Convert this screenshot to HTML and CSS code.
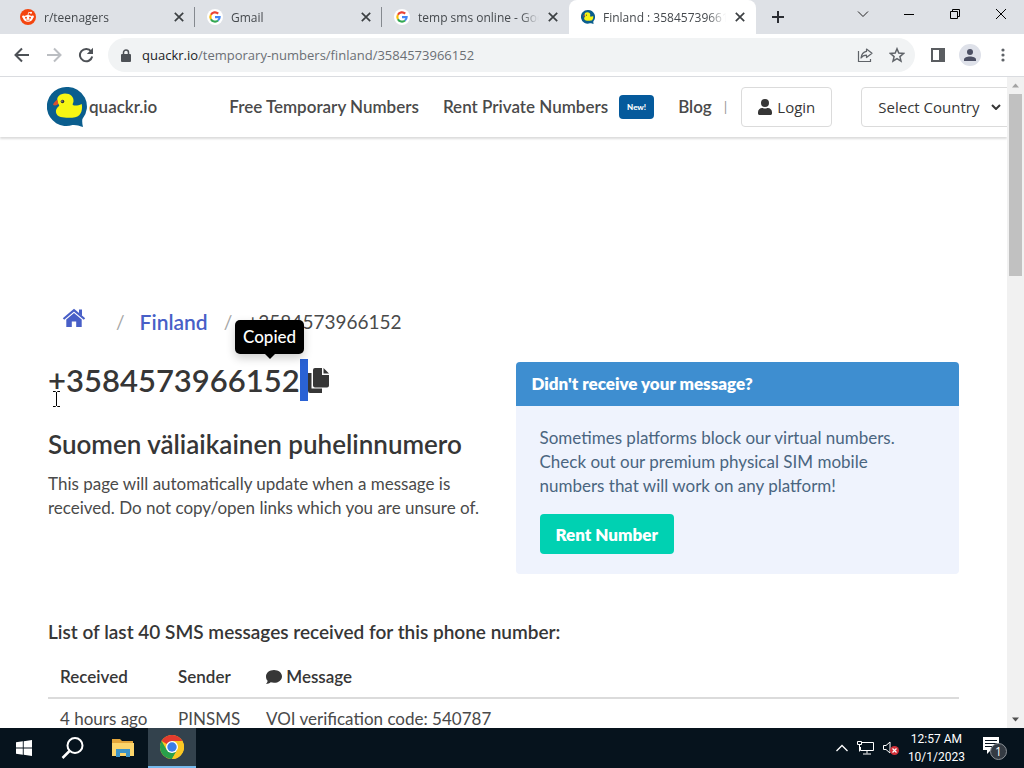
FILE: index.html
```html
<!DOCTYPE html>
<html lang="en">
<head>
<meta charset="UTF-8">
<meta name="viewport" content="width=device-width, initial-scale=1.0">
<title>Finland : 3584573966152</title>
<link rel="stylesheet" href="styles.css">
</head>
<body>

<!-- shared icons -->
<svg class="symbols" aria-hidden="true">
    <symbol id="google" viewBox="0 0 18 18">
        <circle cx="9" cy="9" r="9" fill="#fff"/>
        <g fill="none" stroke-width="2.4">
            <path d="M12.6 5.2A5.2 5.2 0 0 0 4.4 6.5" stroke="#ea4335"/>
            <path d="M4.4 6.5A5.2 5.2 0 0 0 4.4 11.5" stroke="#fbbc05"/>
            <path d="M4.4 11.5A5.2 5.2 0 0 0 12.4 12.9" stroke="#34a853"/>
            <path d="M12.4 12.9A5.2 5.2 0 0 0 14.2 9.2H9" stroke="#4285f4"/>
        </g>
    </symbol>
    <symbol id="close" viewBox="0 0 10 10">
        <path d="M1.5 1.5l7 7M8.5 1.5l-7 7" stroke="#3c4043" stroke-width="1.4"/>
    </symbol>
    <symbol id="duck" viewBox="0 0 40 40">
        <path d="M19.500 0a19.500 19.500 0 1 0 6 38c4-.3 6 .6 10.500 2-.8-3-1-6-.6-8A19.500 19.500 0 0 0 19.500 0z" fill="#0b5e8e"/>
        <path d="M10.500 15C9 10 13 6.500 18 6.500c5.500 0 9 3.500 8.500 8-.2 1.500-1 2.300-.8 3.200 1.500 1.500 5.500 1 9-.8 1 4 .3 12-6.500 13.300-4 .8-11 .7-14.500-.3-5.500-1.500-6.500-7.500-1.700-11 1-.8-1-1.700-1.500-3.900z" fill="#f7f614"/>
        <path d="M10.300 12.500C8.500 14 6.500 15.500 6 18c2 1 4.300.3 5.300-1.200z" fill="#d9502e"/>
        <circle cx="15.500" cy="14.500" r="1.800" fill="#333"/>
        <circle cx="15" cy="14" r=".6" fill="#fff"/>
    </symbol>
</svg>

<header class="tabstrip">
    <div class="tab">
        <svg class="favicon" viewBox="0 0 16 16">
            <circle cx="8" cy="8" r="8" fill="#f4450f"/>
            <ellipse cx="8" cy="9.300" rx="4.800" ry="3.400" fill="#fff"/>
            <circle cx="3.400" cy="7.700" r="1.300" fill="#fff"/>
            <circle cx="12.600" cy="7.700" r="1.300" fill="#fff"/>
            <circle cx="11" cy="3.700" r="1" fill="#fff"/>
            <path d="M8 6l.7-2.700 2 .5" fill="none" stroke="#fff" stroke-width=".8"/>
            <circle cx="6" cy="8.700" r="1" fill="#f4450f"/>
            <circle cx="10" cy="8.700" r="1" fill="#f4450f"/>
            <path d="M6 10.800q2 1.200 4 0" fill="none" stroke="#f4450f" stroke-width=".7"/>
        </svg>
        <span class="tab-title">r/teenagers</span>
        <button class="tab-close" aria-label="Close tab"><svg><use href="#close"/></svg></button>
    </div>
    <div class="tab">
        <svg class="favicon"><use href="#google"/></svg>
        <span class="tab-title">Gmail</span>
        <button class="tab-close" aria-label="Close tab"><svg><use href="#close"/></svg></button>
    </div>
    <div class="tab last">
        <svg class="favicon"><use href="#google"/></svg>
        <span class="tab-title">temp sms online - Google Search</span>
        <button class="tab-close" aria-label="Close tab"><svg><use href="#close"/></svg></button>
    </div>
    <div class="tab active">
        <svg class="favicon duck-small"><use href="#duck"/></svg>
        <span class="tab-title">Finland : 3584573966152</span>
        <button class="tab-close" aria-label="Close tab"><svg><use href="#close"/></svg></button>
    </div>
    <button class="new-tab" aria-label="New tab">
        <svg width="12" height="12" viewBox="0 0 12 12"><path d="M6 0v12M0 6h12" stroke="#2b2d33" stroke-width="2"/></svg>
    </button>
    <div class="window-buttons">
        <button aria-label="Search tabs"><svg width="12" height="12" viewBox="0 0 12 12"><path d="M1 3.500l5 5 5-5" fill="none" stroke="#222"/></svg></button>
        <button aria-label="Minimize"><svg width="12" height="12" viewBox="0 0 12 12"><path d="M1 6.500h10" stroke="#000"/></svg></button>
        <button aria-label="Restore"><svg width="12" height="12" viewBox="0 0 12 12"><path d="M1.500 3.500h7v7h-7zM3.500 3.500v-2h7v7h-2" fill="none" stroke="#000"/></svg></button>
        <button aria-label="Close"><svg width="12" height="12" viewBox="0 0 12 12"><path d="M1 1l10 10M11 1L1 11" stroke="#000"/></svg></button>
    </div>
</header>

<div class="toolbar">
    <button aria-label="Back"><svg width="16" height="16" viewBox="0 0 16 16"><path d="M15 8H2M8 1.500L1.500 8 8 14.500" fill="none" stroke="#4d5156" stroke-width="2"/></svg></button>
    <button aria-label="Forward"><svg width="16" height="16" viewBox="0 0 16 16"><path d="M1 8h13M8 1.500L14.500 8 8 14.500" fill="none" stroke="#bbbec2" stroke-width="2"/></svg></button>
    <button aria-label="Reload"><svg width="16" height="16" viewBox="0 0 16 16"><path d="M13.200 4.500A6.200 6.200 0 1 0 14.200 9.500" fill="none" stroke="#4d5156" stroke-width="2"/><path d="M15 .8V7H8.800z" fill="#4d5156"/></svg></button>
    <div class="omnibox">
        <svg class="lock" width="10" height="13" viewBox="0 0 10 13"><path d="M2.500 5.500V3.500a2.500 2.500 0 0 1 5 0v2" fill="none" stroke="#4d5156" stroke-width="1.500"/><rect x="0" y="5" width="10" height="8" rx="1" fill="#4d5156"/></svg>
        <a class="url" href="#">quackr.io<span>/temporary-numbers/finland/3584573966152</span></a>
        <button aria-label="Share"><svg width="16" height="16" viewBox="0 0 16 16"><path d="M1.500 4v10.500h12V12" fill="none" stroke="#5f6368" stroke-width="1.200"/><path d="M9.500 2l5.500 4.300-5.500 4.200V8.200C7 8.200 5.300 9 4 11c.4-3.500 2.500-6 5.500-6.600z" fill="none" stroke="#5f6368" stroke-width="1.200" stroke-linejoin="round"/></svg></button>
        <button aria-label="Bookmark"><svg width="16" height="16" viewBox="0 0 16 16"><path d="M8 1.800l1.800 4.300 4.700.4-3.600 3.100 1.100 4.600L8 11.700l-4 2.500 1.100-4.600L1.500 6.500l4.700-.4z" fill="none" stroke="#5f6368" stroke-width="1.500"/></svg></button>
    </div>
    <button aria-label="Side panel"><svg width="14" height="14" viewBox="0 0 14 14"><path d="M0 0h14v14H0zM2 2v10h6V2z" fill="#5a5d61" fill-rule="evenodd"/></svg></button>
    <button class="profile" aria-label="Profile"><svg width="22" height="22" viewBox="0 0 22 22"><circle cx="11" cy="11" r="11" fill="#dee1e9"/><circle cx="11" cy="8" r="3" fill="#4b4f63"/><path d="M5 17v-1.500c0-4 12-4 12 0V17z" fill="#4b4f63"/></svg></button>
    <button aria-label="Menu"><svg width="4" height="14" viewBox="0 0 4 14"><g fill="#5f6368"><circle cx="2" cy="2" r="1.600"/><circle cx="2" cy="7" r="1.600"/><circle cx="2" cy="12" r="1.600"/></g></svg></button>
</div>

<div class="window">
    <div class="page">
        <nav class="navbar">
            <a class="brand" href="#"><svg width="40" height="40"><use href="#duck"/></svg>quackr.io</a>
            <a class="nav-link" href="#">Free Temporary Numbers</a>
            <a class="nav-link" href="#">Rent Private Numbers <span class="badge">New!</span></a>
            <a class="nav-link" href="#">Blog</a>
            <span class="divider">|</span>
            <button class="login"><svg width="14" height="16" viewBox="0 0 448 512"><path fill="#363636" d="M224 256a128 128 0 1 0 0-256 128 128 0 0 0 0 256zm90 32h-17a174 174 0 0 1-146 0h-17C60 288 0 348 0 422v42c0 27 21 48 48 48h352c27 0 48-21 48-48v-42c0-74-60-134-134-134z"/></svg>Login</button>
            <div class="country">
                <select aria-label="Select Country"><option>Select Country</option></select>
                <svg width="10" height="6" viewBox="0 0 10 6"><path d="M1 1l4 4 4-4" fill="none" stroke="#363636" stroke-width="2"/></svg>
            </div>
        </nav>

        <main class="container">
            <div class="breadcrumb">
                <a class="home" href="#" aria-label="Home"><svg width="24" height="20" viewBox="0 0 24 20"><path d="M1.500 11L12 2.200 22.500 11" fill="none" stroke="#485fc7" stroke-width="2.200"/><path d="M17 1.500h3V8l-3-2.500z" fill="#485fc7"/><path d="M4.300 11.500L12 5l7.700 6.500V19h-5.500v-5.500H9.800V19H4.300z" fill="#485fc7"/></svg></a>
                <span class="slash">/</span>
                <a class="place" href="#">Finland</a>
                <span class="slash">/</span>
                <span>+3584573966152</span>
            </div>

            <div class="columns">
                <div class="number-info">
                    <h1>+3584573966152<span class="selected">&nbsp;</span><button class="copy" aria-label="Copy"><svg width="21" height="25" viewBox="0 0 21 25"><path d="M0 5h3.500v15.500H14V25H2a2 2 0 0 1-2-2z" fill="#363636"/><path d="M7 0h7v7h7v10.500a2 2 0 0 1-2 2H7a2 2 0 0 1-2-2V2a2 2 0 0 1 2-2z" fill="#363636"/><path d="M15.500 0L21 5.500h-5.500z" fill="#363636"/></svg></button><span class="tooltip">Copied</span></h1>
                    <h2>Suomen väliaikainen puhelinnumero</h2>
                    <p>This page will automatically update when a message is received. Do not copy/open links which you are unsure of.</p>
                    <svg class="cursor" width="7" height="16" viewBox="0 0 7 16"><path d="M0 .5h2.500l1 1 1-1H7M0 15.500h2.500l1-1 1 1H7M3.500 1v14" fill="none" stroke="#000"/></svg>
                </div>
                <article class="message">
                    <h3>Didn't receive your message?</h3>
                    <div class="message-body">
                        <p>Sometimes platforms block our virtual numbers. Check out our premium physical SIM mobile numbers that will work on any platform!</p>
                        <button class="rent">Rent Number</button>
                    </div>
                </article>
            </div>

            <h4>List of last 40 SMS messages received for this phone number:</h4>
            <table>
                <thead>
                    <tr>
                        <th class="received">Received</th>
                        <th class="sender">Sender</th>
                        <th><svg width="16" height="14" viewBox="0 0 16 14"><path d="M8 0c4.500 0 8 2.800 8 6.400s-3.500 6.400-8 6.400c-1.200 0-2.300-.2-3.300-.5C3.500 13.200 1.800 14 0 14c.8-.9 1.500-2 1.600-3.200C.6 9.600 0 8.100 0 6.400 0 2.800 3.500 0 8 0z" fill="#363636"/></svg> Message</th>
                    </tr>
                </thead>
                <tbody>
                    <tr>
                        <td>4 hours ago</td>
                        <td>PINSMS</td>
                        <td>VOI verification code: 540787</td>
                    </tr>
                </tbody>
            </table>
        </main>
    </div>
    <div class="scrollbar">
        <svg width="17" height="17" viewBox="0 0 17 17"><path d="M5 10.500l3.500-4 3.500 4z" fill="#a3a3a3"/></svg>
        <div class="thumb"></div>
        <svg class="down" width="17" height="17" viewBox="0 0 17 17"><path d="M5 6.500l3.500 4 3.500-4z" fill="#505050"/></svg>
    </div>
</div>

<footer class="taskbar">
    <button aria-label="Start"><svg width="16" height="16" viewBox="0 0 16 16"><path d="M0 2.300L6.800 1.300v6.200H0zM7.700 1.200L16 0v7.500H7.700zM0 8.400h6.800v6.300L0 13.700zM7.700 8.400H16V16l-8.300-1.200z" fill="#fff"/></svg></button>
    <button aria-label="Search"><svg width="24" height="24" viewBox="0 0 24 24"><circle cx="14" cy="9.500" r="7.500" fill="none" stroke="#fff" stroke-width="2"/><path d="M8.500 15l-7 7" stroke="#fff" stroke-width="2.500"/></svg></button>
    <button aria-label="File Explorer"><svg width="22" height="18" viewBox="0 0 22 18"><path d="M0 0h8l2 2h11v5H0z" fill="#e3a63b"/><path d="M0 4h22v13H0z" fill="#fcd56b"/><path d="M4 10h14v8h-4v-4H8v4H4z" fill="#3c93c8"/></svg></button>
    <button class="running" aria-label="Google Chrome"><svg width="24" height="24" viewBox="0 0 24 24"><circle cx="12" cy="12" r="12" fill="#fbc723"/><path d="M12 12L1.600 6A12 12 0 0 1 22.400 6H12z" fill="#e33b2e"/><path d="M1.600 6L6.800 15 12 18l-.8 6A12 12 0 0 1 1.600 6z" fill="#29a04b"/><path d="M6.800 15h10.400L12 24h-1z" fill="#29a04b"/><path d="M17.200 15L12 24A12 12 0 0 0 22.400 6H12z" fill="#fbc723"/><circle cx="12" cy="12" r="6" fill="#fff"/><circle cx="12" cy="12" r="4.700" fill="#3b7de8"/></svg></button>
    <div class="tray">
        <svg width="12" height="8" viewBox="0 0 12 8"><path d="M.5 7L6 1.500 11.500 7" fill="none" stroke="#fff" stroke-width="1.300"/></svg>
        <svg width="17" height="14" viewBox="0 0 17 14"><path d="M5 1.500h11.500v8H3.500V6M10 9.500v3M6 13h8M.5.500h4v3h-4zM2.500 4v6.500" fill="none" stroke="#fff"/></svg>
        <svg width="16" height="14" viewBox="0 0 16 14"><path d="M.5 4.500H3l4-3.500v11L3 8.500H.500z" fill="none" stroke="#fff"/><circle cx="11.500" cy="9.500" r="4.500" fill="#d22f38"/><path d="M9.500 7.500l4 4M13.500 7.500l-4 4" stroke="#fff" stroke-width="1.200"/></svg>
        <div class="clock">12:57 AM<br>10/1/2023</div>
        <svg class="action" width="26" height="26" viewBox="0 0 26 26"><path d="M1 2h16v13H9l-4 4v-4H1z" fill="#fff"/><path d="M3 5.500h12M3 8.500h12M3 11.500h7" stroke="#08141f"/><circle cx="16.500" cy="16.500" r="8" fill="#343b43" stroke="#8a9096"/><text x="16.500" y="21" text-anchor="middle">1</text></svg>
    </div>
</footer>

</body>
</html>
```
FILE: styles.css
```css
* {
    box-sizing: border-box;
}
body {
    margin: 0;
    height: 100vh;
    display: flex;
    flex-direction: column;
    overflow: hidden;
    font-family: "Open Sans", "Noto Sans", sans-serif;
    background-color: #fff;
}
button {
    border: none;
    background: none;
    padding: 0;
    font-family: inherit;
    display: flex;
    align-items: center;
    justify-content: center;
}
a {
    text-decoration: none;
}
h1, h2, h3, h4, p {
    margin: 0;
}
svg {
    flex: none;
}
.symbols {
    display: none;
}

/* tab strip */
.tabstrip {
    display: flex;
    height: 34px;
    flex: none;
    padding-left: 8px;
    background-color: #dee1e6;
    font-size: 12px;
    color: #45494d;
}
.tab {
    width: 187px;
    display: flex;
    align-items: center;
    padding: 0 10px 0 12px;
    background: linear-gradient(#85898f, #85898f) right center / 1px 20px no-repeat;
}
.tab.last {
    background: none;
}
.tab.active {
    background: #fff;
    border-radius: 8px 8px 0 0;
}
.favicon {
    width: 16px;
    height: 16px;
    margin-right: 8px;
}
.favicon.duck-small {
    width: 14px;
    margin-right: 8px;
}
.tab-title {
    flex: 1;
    overflow: hidden;
    white-space: nowrap;
    margin-right: 8px;
    -webkit-mask-image: linear-gradient(to right, #000 85%, transparent);
    mask-image: linear-gradient(to right, #000 85%, transparent);
}
.tab-close svg {
    width: 12px;
    height: 12px;
}
.new-tab {
    width: 44px;
}
.window-buttons {
    display: flex;
    margin-left: auto;
    height: 28px;
}
.window-buttons button {
    width: 46px;
}

/* toolbar */
.toolbar {
    display: flex;
    align-items: center;
    height: 43px;
    flex: none;
    padding: 0 12px 0 6px;
    border-bottom: 1px solid #dadce0;
}
.toolbar > button {
    width: 32px;
}
.omnibox {
    flex: 1;
    display: flex;
    align-items: center;
    height: 34px;
    margin: 0 7px 0 6px;
    padding: 0 2px 0 13px;
    border-radius: 17px;
    background-color: #f1f3f4;
}
.omnibox button {
    width: 32px;
}
.url {
    flex: 1;
    margin-left: 11px;
    font-size: 13px;
    color: #202124;
}
.url span {
    color: #6b6f74;
}
.toolbar > button:last-child {
    width: 34px;
    margin-right: -8px;
}

/* browser content */
.window {
    flex: 1;
    min-height: 0;
    display: flex;
}
.page {
    flex: 1;
    min-width: 0;
    overflow: hidden;
    font-family: "Lato", sans-serif;
    font-size: 17px;
    line-height: 24px;
    color: #4a4a4a;
}
.scrollbar {
    width: 17px;
    flex: none;
    display: flex;
    flex-direction: column;
    align-items: center;
    background-color: #f1f1f1;
}
.thumb {
    width: 13px;
    height: 28%;
    background-color: #c1c1c1;
}
.scrollbar .down {
    margin-top: auto;
}

.navbar {
    display: flex;
    align-items: center;
    height: 60px;
    padding-left: 47px;
    white-space: nowrap;
    box-shadow: 0 2px 2px rgba(0, 0, 0, 0.14);
}
.brand, .nav-link {
    display: flex;
    align-items: center;
    font-weight: 600;
    color: #4a4a4a;
}
.brand {
    gap: 2px;
    margin-right: 48px;
}
.nav-link {
    margin-left: 24px;
}
.badge {
    margin-left: 11px;
    padding: 0 8px;
    border-radius: 4px;
    background-color: #055a9c;
    color: #fff;
    font-size: 8px;
    font-weight: 900;
}
.divider {
    margin: 0 14px 0 12px;
    color: #999;
    font-size: 14px;
}
.login, .country select {
    height: 40px;
    flex: none;
    border: 1px solid #dbdbdb;
    border-radius: 4px;
    background-color: #fff;
    color: #363636;
    font-family: "Open Sans", sans-serif;
    font-size: 15px;
}
.login {
    gap: 5px;
    padding: 0 16px;
}
.country {
    position: relative;
    flex: none;
    margin-left: 29px;
}
.country select {
    width: 160px;
    padding: 0 16px;
    appearance: none;
}
.country svg {
    position: absolute;
    right: 20px;
    top: 17px;
}

.container {
    padding: 170px 48px 0;
}
.breadcrumb {
    display: flex;
    align-items: center;
    height: 30px;
    padding-left: 14px;
    font-size: 19px;
}
.breadcrumb a {
    color: #485fc7;
    font-weight: 600;
}
.breadcrumb .place {
    font-size: 21px;
}
.breadcrumb .home {
    display: flex;
    margin-right: 14px;
    padding-bottom: 8px;
}
.slash {
    margin: 0 15px 0 16px;
    color: #a5a5a5;
}

.columns {
    display: grid;
    grid-template-columns: 1fr 1fr;
    gap: 24px;
    padding-top: 13px;
}
.number-info {
    position: relative;
}
h1, h2, h4, th {
    color: #363636;
    font-weight: 600;
}
h1 {
    position: relative;
    display: flex;
    align-items: center;
    width: max-content;
    height: 60px;
    font-size: 31px;
    line-height: 42px;
}
.selected {
    width: 8px;
    background-color: #2a62d4;
}
.tooltip {
    position: absolute;
    left: 187px;
    bottom: 56px;
    padding: 5px 8px;
    border-radius: 5px;
    background-color: #000;
    box-shadow: 0 4px 10px rgba(0, 0, 0, 0.2);
    color: #fff;
    font-size: 17px;
    font-weight: 500;
    line-height: 24px;
}
.tooltip::after {
    content: "";
    position: absolute;
    top: 100%;
    left: calc(50% - 5px);
    border: 5px solid transparent;
    border-top-color: #000;
}
h2 {
    margin-top: 18px;
    font-size: 26px;
    line-height: 32px;
}
.number-info p {
    margin-top: 12px;
}
.cursor {
    position: absolute;
    left: 5px;
    top: 41px;
}

.message {
    margin-top: 12px;
    border-radius: 4px;
    background-color: #eff3fd;
    overflow: hidden;
}
.message h3 {
    padding: 10px 16px;
    background-color: #3e8ed0;
    color: #fff;
    font-size: 17px;
    font-weight: 800;
}
.message-body {
    padding: 20px 24px;
    color: #4a6580;
}
.rent {
    height: 40px;
    margin-top: 16px;
    padding: 0 16px;
    border-radius: 4px;
    background-color: #00d1b2;
    color: #fff;
    font-size: 17px;
    font-weight: 800;
}

h4 {
    margin-top: 46px;
    font-size: 19px;
}
table {
    width: 100%;
    margin-top: 13px;
    border-collapse: collapse;
}
th, td {
    padding: 8px 12px;
    text-align: left;
    white-space: nowrap;
}
th {
    border-bottom: 2px solid #dbdbdb;
}
th svg {
    vertical-align: -1px;
}
.received {
    width: 118px;
}
.sender {
    width: 88px;
}

/* taskbar */
.taskbar {
    display: flex;
    height: 40px;
    flex: none;
    background-color: #06131d;
    color: #fff;
}
.taskbar button {
    width: 50px;
}
.taskbar button:first-child {
    width: 48px;
}
.taskbar .running {
    width: 48px;
    background-color: #33424d;
    border-bottom: 2px solid #76b9ed;
}
.tray {
    display: flex;
    align-items: center;
    gap: 9px;
    margin-left: auto;
    padding-right: 16px;
}
.clock {
    font-family: Roboto, sans-serif;
    font-size: 12px;
    line-height: 18px;
    text-align: center;
}
.action {
    margin-left: 8px;
}
.action text {
    fill: #fff;
    font-size: 12px;
}
```
